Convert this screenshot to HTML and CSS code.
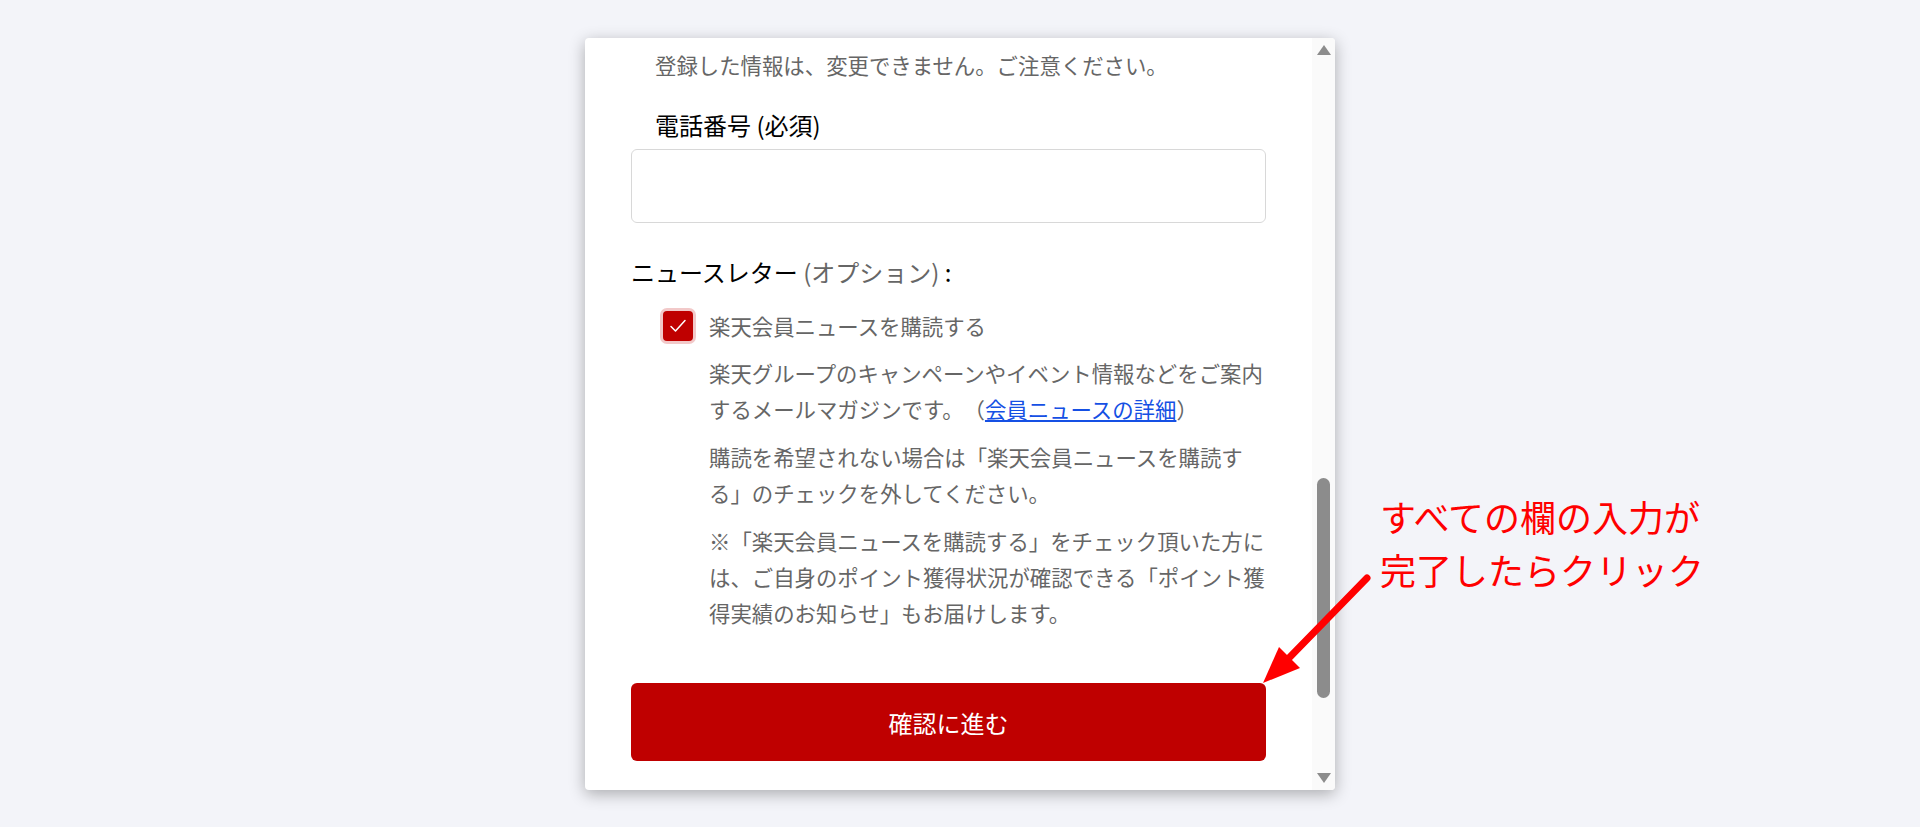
FILE: index.html
```html
<!DOCTYPE html>
<html lang="ja">
<head>
	<meta charset="UTF-8">
	<title>会員登録</title>
	<link rel="stylesheet" href="styles.css">
</head>
<body>
	<div class="card">
		<div class="card-body">
			<p class="note">登録した情報は、変更できません。ご注意ください。</p>
			<label class="field-label" for="tel">電話番号 (必須)</label>
			<input type="tel" id="tel" class="field-input">

			<div class="news-title">ニュースレター <span class="opt">(オプション)</span> :</div>
			<label class="check-row">
				<span class="check-box">
					<svg width="30" height="30" viewBox="0 0 30 30"><path d="M8 15.5 L12.5 20 L22 9.5" fill="none" stroke="#fff" stroke-width="1.5" stroke-linecap="round" stroke-linejoin="round"/></svg>
				</span>
				<span class="check-text">楽天会員ニュースを購読する</span>
			</label>
			<div class="news-desc">
				<p>楽天グループのキャンペーンやイベント情報などをご案内するメールマガジンです。（<a href="#">会員ニュースの詳細</a>）</p>
				<p>購読を希望されない場合は「楽天会員ニュースを購読する」のチェックを外してください。</p>
				<p>※「楽天会員ニュースを購読する」をチェック頂いた方には、ご自身のポイント獲得状況が確認できる「ポイント獲得実績のお知らせ」もお届けします。</p>
			</div>

			<button class="submit">確認に進む</button>
		</div>
		<div class="scrollbar">
			<span class="sb-up"></span>
			<span class="sb-thumb"></span>
			<span class="sb-down"></span>
		</div>
	</div>

	<!-- 注釈 -->
	<div class="memo">すべての欄の入力が<br>完了したらクリック</div>
	<svg class="memo-arrow" width="120" height="120" viewBox="0 0 120 120">
		<line x1="112" y1="8" x2="32" y2="90" stroke="#ff0000" stroke-width="7" stroke-linecap="round"/>
		<polygon points="8,113 24,77 45,98" fill="#ff0000"/>
	</svg>
</body>
</html>
```

FILE: styles.css
```css
*{
	margin: 0;
	padding: 0;
	box-sizing: border-box;
}
body{
	background-color: #f3f4f9;
	font-family: "Noto Sans CJK JP", "Noto Sans", sans-serif;
	height: 827px;
	overflow: hidden;
	text-spacing-trim: space-all;
}
.card{
	width: 750px;
	height: 752px;
	margin: 38px auto 0;
	background-color: #fff;
	border-radius: 4px;
	box-shadow: 0 4px 16px rgba(0,0,0,.3);
	display: flex;
	overflow: hidden;
}
.card-body{
	flex: 1;
	padding: 9px 46px 0;
	overflow: hidden;
}
.note{
	padding-left: 24px;
	font-size: 21.4px;
	line-height: 36px;
	color: #666;
}
.field-label{
	display: block;
	margin-top: 24px;
	padding-left: 24px;
	font-size: 24px;
	line-height: 36px;
	color: #000;
}
.field-input{
	display: block;
	width: 100%;
	height: 74px;
	margin-top: 6px;
	border: 1px solid #d8d8d8;
	border-radius: 6px;
	outline: none;
	padding: 0 16px;
	font-size: 22px;
}
.news-title{
	margin-top: 31px;
	font-size: 24px;
	line-height: 36px;
	color: #000;
}
.news-title .opt{
	color: #666;
}
.check-row{
	display: flex;
	align-items: center;
	height: 36px;
	margin-top: 18px;
	padding-left: 32px;
}
.check-box{
	width: 30px;
	height: 30px;
	border-radius: 4px;
	background-color: #bf0000;
	box-shadow: 0 0 0 3px #f2c9c9;
	display: flex;
	align-items: center;
	justify-content: center;
}
.check-text{
	margin-left: 16px;
	font-size: 21.4px;
	line-height: 36px;
	color: #666;
}
.news-desc{
	margin: 11px 0 0 78px;
	width: 560px;
	font-size: 21.4px;
	line-height: 36px;
	color: #666;
}
.news-desc p + p{
	margin-top: 12px;
}
.news-desc a{
	color: #1550e4;
	text-decoration: underline;
}
.submit{
	display: block;
	width: 100%;
	height: 78px;
	margin-top: 52px;
	border: none;
	border-radius: 6px;
	background-color: #bf0000;
	color: #fff;
	font-family: inherit;
	font-size: 24px;
	cursor: pointer;
}
.scrollbar{
	width: 23px;
	background-color: #fafafa;
	display: flex;
	flex-direction: column;
	align-items: center;
}
.sb-up{
	margin-top: 7px;
	width: 0;
	height: 0;
	border-left: 7.5px solid transparent;
	border-right: 7.5px solid transparent;
	border-bottom: 10px solid #8c8c8c;
}
.sb-thumb{
	width: 13px;
	height: 220px;
	margin-top: 423px;
	border-radius: 7px;
	background-color: #8c8c8c;
}
.sb-down{
	margin-top: auto;
	margin-bottom: 7px;
	width: 0;
	height: 0;
	border-left: 7.5px solid transparent;
	border-right: 7.5px solid transparent;
	border-top: 10px solid #8c8c8c;
}
.memo{
	position: absolute;
	left: 1380px;
	top: 490px;
	font-size: 36px;
	line-height: 53px;
	color: #ff0000;
	white-space: nowrap;
}
.memo-arrow{
	position: absolute;
	left: 1255px;
	top: 570px;
}
```
